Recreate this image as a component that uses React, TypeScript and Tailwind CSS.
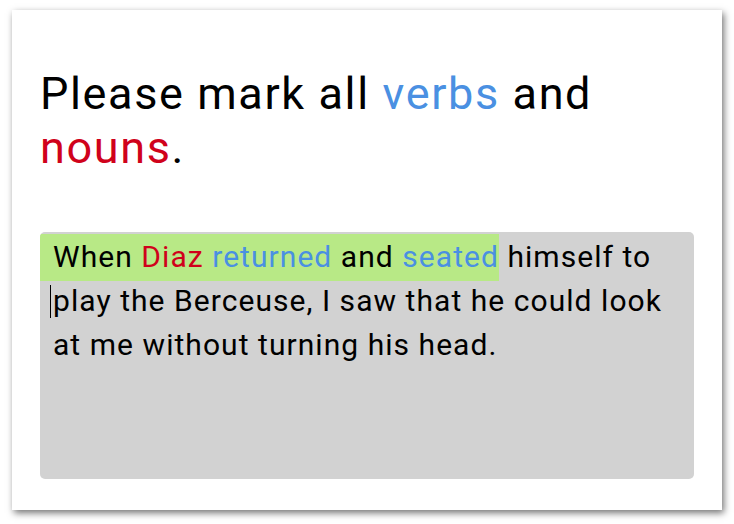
export default function App() {
  return (
    <div className="min-h-screen bg-white pt-[10px] pl-[12px]" style={{ fontFamily: 'Roboto, "Noto Sans", sans-serif' }}>
      <div className="w-[710px] h-[500px] bg-white shadow-[2px_3px_7px_rgba(0,0,0,0.55)] px-[28px] pt-[57px]">
        <h1 className="text-[45px] leading-[54px] tracking-[0.036em] text-black font-normal">
          Please mark all <span className="text-[#4a90e2]">verbs</span> and{' '}
          <span className="text-[#d0021b]">nouns</span>.
        </h1>

        <div className="mt-[57px] h-[247px] rounded-[5px] bg-[#d2d2d2] overflow-hidden pl-[13px] pr-[10px] pt-[3px]">
          <p className="text-[30px] leading-[44px] tracking-[0.035em] text-black">
            <span className="bg-[#b8e986] -ml-[13px] pl-[13px] pt-[5px] pb-[7px]">
              When <span className="text-[#d0021b]">Diaz</span>{' '}
              <span className="text-[#4a90e2]">returned</span> and{' '}
              <span className="text-[#4a90e2]">seated</span>
            </span>{' '}
            himself to{' '}
            <span className="whitespace-nowrap">
              <span className="inline-block w-px h-[33px] bg-black align-[-7px] -ml-[3px] mr-[2px]" />play
            </span>{' '}
            the Berceuse, I saw that he could look at me without turning his head.
          </p>
        </div>
      </div>
    </div>
  )
}
